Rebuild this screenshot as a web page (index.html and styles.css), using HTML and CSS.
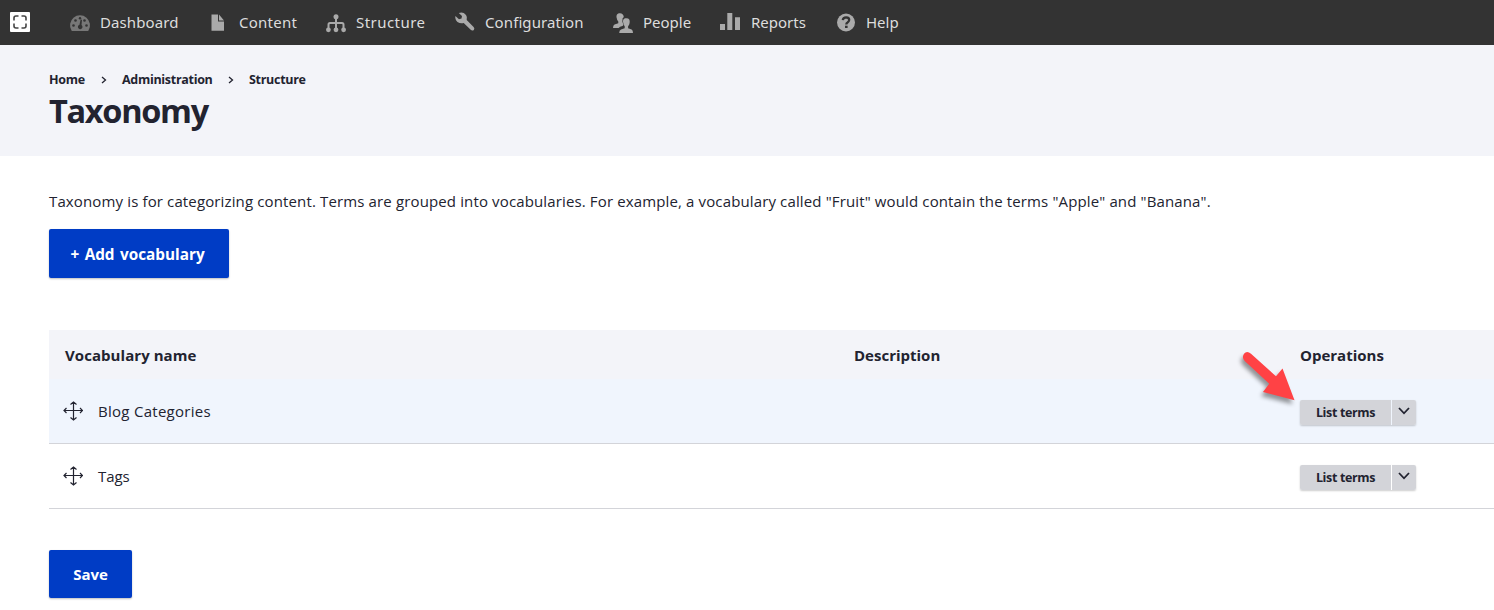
FILE: index.html
```html
<!DOCTYPE html>
<html lang="en">
<head>
<meta charset="utf-8">
<title>Taxonomy</title>
<link rel="stylesheet" href="styles.css">
</head>
<body>
<nav class="toolbar">
  <a class="brand"><svg width="20" height="20" viewBox="0 0 20 20"><rect width="20" height="20" rx="1" fill="#fff"/><path d="M4 8.500V6Q4 4 6 4H8.500M11.500 4H14Q16 4 16 6V8.500M16 11.500V14Q16 16 14 16H11.500M8.500 16H6Q4 16 4 14V11.500" fill="none" stroke="#444" stroke-width="1.600"/></svg></a>
  <a class="tab dashboard"><svg width="20" height="20" viewBox="0 0 20 20"><path d="M1.500 17.500A10 10 0 1 1 18.500 17.500Q18.200 18 17.500 18H2.500Q1.800 18 1.500 17.500Z" fill="#777"/><g fill="#333"><circle cx="3.500" cy="12.500" r="1.300"/><circle cx="5.500" cy="7.500" r="1.300"/><circle cx="14.500" cy="7.500" r="1.300"/><circle cx="16.500" cy="12.500" r="1.300"/><circle cx="10" cy="5.300" r="1.200"/><path d="M10.600 6.500L12 6.800L11.500 12A2.300 2.300 0 1 1 9.500 11.700Z"/></g></svg><span>Dashboard</span></a>
  <a class="tab content"><svg width="20" height="20" viewBox="0 0 20 20"><path d="M3.500 1.500H10V8.500H16V17.700H3.500ZM11 1.500L16 7.500H11Z" fill="#aaa"/></svg><span>Content</span></a>
  <a class="tab structure"><svg width="20" height="20" viewBox="0 0 20 20"><g fill="#aaa"><circle cx="10" cy="3.800" r="2.500"/><circle cx="2.400" cy="16.800" r="2.400"/><circle cx="10" cy="16.800" r="2.400"/><circle cx="17.600" cy="16.800" r="2.400"/></g><path d="M10 4V17M2.500 17V11.500Q2.500 10 4 10H16Q17.500 10 17.500 11.500V17" fill="none" stroke="#aaa" stroke-width="2"/></svg><span>Structure</span></a>
  <a class="tab configuration"><svg width="20" height="20" viewBox="0 0 20 20"><path d="M3.800.100Q8-1.500 11 2Q12.600 4.200 11.700 7L18.600 13.900Q20 15.500 18.800 17Q17.200 18.300 15.700 16.800L8.700 9.900Q5.500 10.800 2.500 9Q-.200 6.500 .400 2.900L4 6.300L6.500 5.500L7 2.900Z" fill="#aaa"/></svg><span>Configuration</span></a>
  <a class="tab people"><svg width="20" height="20" viewBox="0 0 20 20"><path d="M7 .2C4.200.2 3 2.300 3.700 4.900Q4.100 7.500 5.300 8.500V10.200L1.500 11.500Q0 12 0 15H5.700Q6.500 13.500 9.500 12.900L10.800 11.800Q9 9 9.500 5.500L10.800 3.900Q10.200.2 7 .2Z" fill="#aaa"/><path d="M13.300 5.200C10.400 5.200 9.600 7.200 10.300 10Q10.500 12 11.700 13.300V15.200L8 16.500Q6.200 17.100 6.200 20H20Q20 17.100 18.600 16.500L15.100 15.200V13.300Q16.400 12 16.600 10C17.200 7.200 16.200 5.200 13.300 5.200Z" fill="#aaa" stroke="#333" stroke-width=".8" paint-order="stroke"/></svg><span>People</span></a>
  <a class="tab reports"><svg width="20" height="20" viewBox="0 0 20 20"><path d="M0 11H5V17H0ZM7.300 0H12.300V17H7.300ZM15 4.200H20V17H15Z" fill="#aaa"/></svg><span>Reports</span></a>
  <a class="tab help"><svg width="20" height="20" viewBox="0 0 20 20"><circle cx="10" cy="9.500" r="9" fill="#aaa"/><path d="M6.800 7.100Q7 4.300 10.200 4.300Q13.300 4.500 13.200 7Q13.100 8.400 11.500 9.400Q10.300 10.100 10.300 11.500" fill="none" stroke="#333" stroke-width="2.300"/><rect x="9" y="12.700" width="2.600" height="2.300" fill="#333"/></svg><span>Help</span></a>
</nav>
<header class="page-header">
  <div class="breadcrumb">
    <span class="crumb home">Home</span>
    <svg width="6" height="8" viewBox="0 0 6 8"><path d="M1 1L4.500 4L1 7" /></svg>
    <span class="crumb admin">Administration</span>
    <svg width="6" height="8" viewBox="0 0 6 8"><path d="M1 1L4.500 4L1 7" /></svg>
    <span class="crumb">Structure</span>
  </div>
  <h1>Taxonomy</h1>
</header>
<main>
  <p class="intro">Taxonomy is for categorizing content. Terms are grouped into vocabularies. For example, a vocabulary called "Fruit" would contain the terms "Apple" and "Banana".</p>
  <a class="button add">+ Add vocabulary</a>
  <section class="table">
    <div class="row head"><b class="vocab">Vocabulary name</b><b class="desc">Description</b><b class="ops">Operations</b></div>
    <div class="row active">
      <svg class="move" width="20" height="20" viewBox="0 0 20 20"><path d="M10.500 1V19M1 9.500H20M7.500 3.500L10.500 1L13.500 3.500M7.500 16.500L10.500 19L13.500 16.500M3.500 7L1 9.500L3.500 12M17 7L19.500 9.500L17 12"/></svg>
      <span class="name blog">Blog Categories</span>
      <div class="dropbutton"><span class="list"><span>List terms</span></span><span class="toggle"><svg width="12" height="8" viewBox="0 0 12 8"><path d="M1 1L6 6.300L11 1"/></svg></span></div>
      <svg class="pointer" width="70" height="66" viewBox="0 0 70 66"><path d="M16 13.700Q19 10.500 23 13.800L48 36.300L54.500 28.500L66.500 60.300L35 52L41.200 43.700L16.700 21Q13.500 17.500 16 13.700Z" fill="#ff4245"/></svg>
    </div>
    <div class="row">
      <svg class="move" width="20" height="20" viewBox="0 0 20 20"><path d="M10.500 1V19M1 9.500H20M7.500 3.500L10.500 1L13.500 3.500M7.500 16.500L10.500 19L13.500 16.500M3.500 7L1 9.500L3.500 12M17 7L19.500 9.500L17 12"/></svg>
      <span class="name tags">Tags</span>
      <div class="dropbutton"><span class="list"><span>List terms</span></span><span class="toggle"><svg width="12" height="8" viewBox="0 0 12 8"><path d="M1 1L6 6.300L11 1"/></svg></span></div>
    </div>
  </section>
  <a class="button save">Save</a>
</main>
</body>
</html>
```

FILE: styles.css
```css
* { box-sizing: border-box; }
body { margin: 0; height: 610px; overflow: hidden; background: #fff; color: #222330; font: 15px/24px "Open Sans", "Noto Sans", sans-serif; }
svg { display: block; flex: none; }
span, b { white-space: nowrap; }
.toolbar { height: 45px; background: #333; display: flex; align-items: center; padding-left: 10px; color: #ddd; font: 15px/24px "Noto Sans", sans-serif; }
.brand { width: 60px; margin-top: -2px; }
.tab { display: flex; align-items: center; gap: 10px; height: 44px; }
.tab span { padding-bottom: 2px; }
.tab svg { overflow: visible; }
.dashboard { width: 138px; }
.content { width: 118px; gap: 11px; }
.structure { width: 129px; }
.configuration { width: 158px; }
.people { width: 107px; }
.reports { width: 116px; gap: 11px; }
.dashboard span, .configuration span { letter-spacing: .1px; }
.content span { letter-spacing: .25px; }
.structure span { letter-spacing: .45px; }
.page-header { height: 111px; background: #f3f4f9; padding: 25px 49px 0; }
.breadcrumb { display: flex; align-items: center; height: 20px; font-size: 12.5px; line-height: 20px; font-weight: 700; letter-spacing: -.3px; }
.breadcrumb svg { fill: none; stroke: #222330; stroke-width: 1.3; margin: 0 15px; }
.home { width: 37px; }
.admin { width: 91px; }
h1 { margin: -2px 0 0; font-size: 32.5px; line-height: 46px; font-weight: 700; letter-spacing: -1.3px; }
main { padding: 33px 0 0 49px; }
.intro { margin: 0; white-space: nowrap; letter-spacing: .135px; }
.button { display: flex; align-items: center; justify-content: center; background: #003cc5; color: #fff; font-weight: 700; border-radius: 2px; box-shadow: 0 1px 2px rgba(0,0,0,.25); }
.add { width: 180px; height: 49px; margin-top: 16px; padding: 0 3px 0 0; word-spacing: 1.5px; font-size: 15.3px; }
.table { margin-top: 52px; }
.row { display: flex; align-items: center; height: 65px; border-bottom: 1px solid #d3d4d9; padding-left: 14px; position: relative; }
.head { height: 49px; border: 0; background: #f3f4f9; padding: 0 0 0 16px; }
.vocab { width: 789px; letter-spacing: .06px; }
.desc { width: 446px; }
.active { background: #f0f5fd; }
.move { fill: none; stroke: #222330; stroke-width: 1.2; }
.name { margin-left: 15px; width: 1202px; }
.blog { letter-spacing: .28px; }
.tags { letter-spacing: -.1px; }
.dropbutton { display: flex; gap: 1px; height: 25px; margin-top: 2px; border-radius: 2px; box-shadow: 0 1px 2px rgba(0,0,0,.2); color: #222330; }
.list { width: 91px; background: #d3d4d9; border-radius: 2px 0 0 2px; font-size: 12.5px; line-height: 25px; font-weight: 700; text-align: center; letter-spacing: -.35px; }
.toggle { width: 24px; background: #d3d4d9; border-radius: 0 2px 2px 0; display: flex; align-items: center; justify-content: center; }
.toggle svg { fill: none; stroke: #222330; stroke-width: 1.8; margin-top: -2px; }
.pointer { position: absolute; left: 1179px; top: -39px; filter: drop-shadow(-2px 4px 2px rgba(0,0,0,.4)); }
.save { width: 83px; height: 48px; margin-top: 41px; }
```
